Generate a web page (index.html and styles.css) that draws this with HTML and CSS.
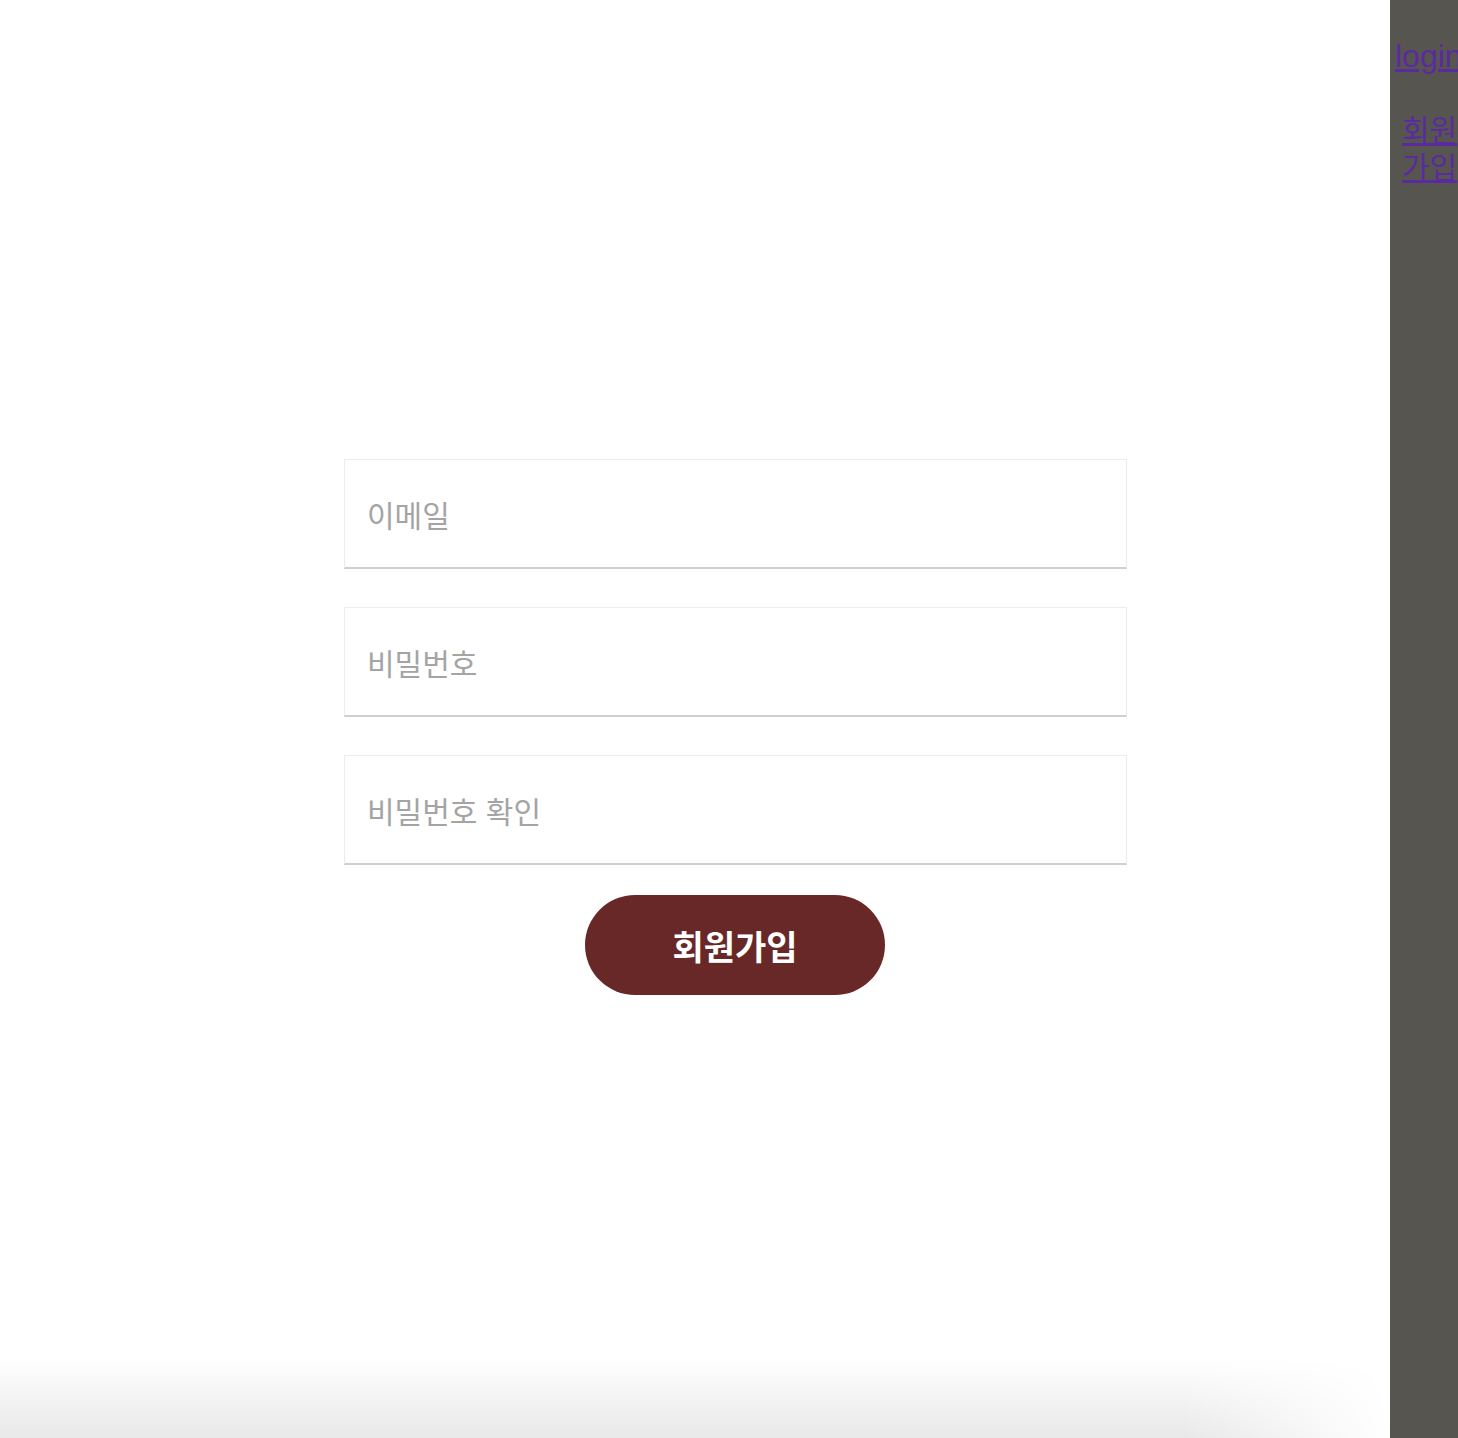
FILE: index.html
```html
<!DOCTYPE html>
<html lang="ko">
<head>
<meta charset="utf-8">
<title>회원가입</title>
<link rel="stylesheet" href="styles.css">
</head>
<body>
<div class="page">
  <main class="main">
    <form class="form">
      <input class="field" type="email" placeholder="이메일">
      <input class="field" type="password" placeholder="비밀번호">
      <input class="field" type="password" placeholder="비밀번호 확인">
      <button class="submit" type="button">회원가입</button>
    </form>
    <div class="shade"></div>
  </main>
  <nav class="side">
    <a class="link link-login" href="#">login</a>
    <a class="link link-join" href="#">회원<br>가입</a>
  </nav>
</div>
</body>
</html>
```
FILE: styles.css
```css
* { box-sizing: border-box; }
html, body { margin: 0; padding: 0; height: 100%; overflow: hidden; }
body { font-family: "Noto Sans CJK KR", "Noto Sans", sans-serif; background: #fff; }
.page { display: flex; height: 1438px; }
.main { flex: 1; position: relative; background: #fff; overflow: hidden; }
.form { display: flex; flex-direction: column; align-items: flex-start; width: 783px; margin: 459px 0 0 344px; }
.field {
  width: 783px; height: 110px; margin-bottom: 38px;
  border: 1px solid #ececec; border-bottom: 2px solid #cfcfcf;
  padding: 0 22px; font-family: inherit; font-size: 30px; color: #333;
  outline: none; background: #fff;
}
.field:nth-of-type(3) { margin-bottom: 30px; }
.field::placeholder { color: #a4a4a4; }
.submit {
  width: 300px; height: 100px; margin-left: 241px; border: none; border-radius: 50px;
  background: #692828; color: #fff; font-family: inherit; font-weight: 700;
  font-size: 34px; cursor: pointer; padding: 0;
}
.shade {
  position: absolute; left: 0; right: 0; bottom: 0; height: 80px;
  background: linear-gradient(to bottom, rgba(0,0,0,0), rgba(0,0,0,0.09));
  -webkit-mask-image: linear-gradient(to right, #000 0%, #000 85%, transparent 100%);
  mask-image: linear-gradient(to right, #000 0%, #000 85%, transparent 100%);
}
.side { width: 68px; flex: none; background: #57554f; overflow: hidden; display: flex; flex-direction: column; }
.link { color: #5b2aa0; text-decoration: underline; font-size: 30px; white-space: nowrap; font-family: "Liberation Sans", "Noto Sans CJK KR", sans-serif; }
.link-login { margin: 36px 0 0 5px; line-height: 40px; font-size: 32px; }
.link-join { margin: 36px 0 0 12px; line-height: 37px; }
```
